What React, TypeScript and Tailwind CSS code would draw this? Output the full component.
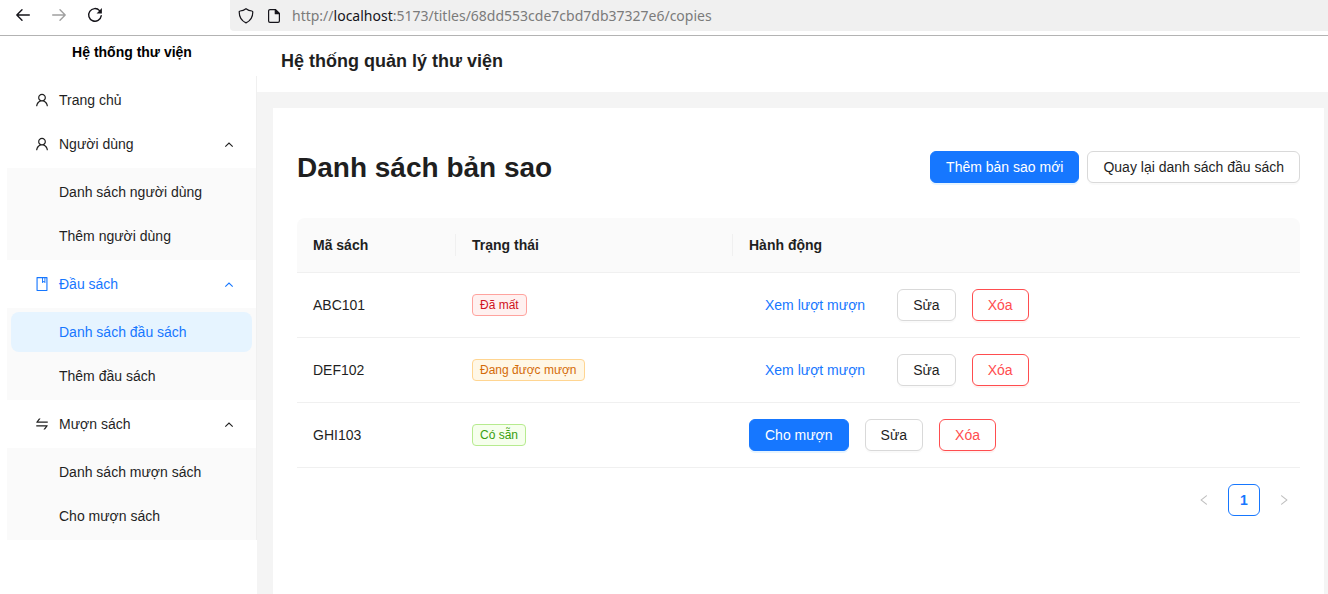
import React from "react";
import {
  AiOutlineUser,
  AiOutlineBook,
  AiOutlineSwap,
  AiOutlineLeft,
  AiOutlineRight,
} from "react-icons/ai";

type MenuGroup = {
  label: string;
  icon: React.ReactNode;
  active?: boolean;
  children?: { label: string; selected?: boolean }[];
};

type Copy = { code: string; status: "lost" | "borrowed" | "available" };

const tight = "64 64 896 896";

const menu: MenuGroup[] = [
  { label: "Trang chủ", icon: <AiOutlineUser size={14} viewBox={tight} /> },
  {
    label: "Người dùng",
    icon: <AiOutlineUser size={14} viewBox={tight} />,
    children: [{ label: "Danh sách người dùng" }, { label: "Thêm người dùng" }],
  },
  {
    label: "Đầu sách",
    icon: <AiOutlineBook size={14} viewBox={tight} />,
    active: true,
    children: [{ label: "Danh sách đầu sách", selected: true }, { label: "Thêm đầu sách" }],
  },
  {
    label: "Mượn sách",
    icon: <AiOutlineSwap size={14} viewBox={tight} />,
    children: [{ label: "Danh sách mượn sách" }, { label: "Cho mượn sách" }],
  },
];

const copies: Copy[] = [
  { code: "ABC101", status: "lost" },
  { code: "DEF102", status: "borrowed" },
  { code: "GHI103", status: "available" },
];

const statusTags = {
  lost: { text: "Đã mất", style: "border-[#ffa39e] bg-[#fff1f0] text-[#cf1322]" },
  borrowed: { text: "Đang được mượn", style: "border-[#ffd591] bg-[#fff7e6] text-[#d46b08]" },
  available: { text: "Có sẵn", style: "border-[#b7eb8f] bg-[#f6ffed] text-[#389e0d]" },
};

const buttonStyles = {
  primary: "border-[#1677ff] bg-[#1677ff] text-white shadow-[0_2px_0_rgba(5,145,255,0.1)]",
  default: "border-[#d9d9d9] bg-white text-[#1f1f1f] shadow-[0_2px_0_rgba(0,0,0,0.02)]",
  danger: "border-[#ff4d4f] bg-white text-[#ff4d4f] shadow-[0_2px_0_rgba(255,38,5,0.06)]",
  link: "border-transparent text-[#1677ff]",
};

function Button({ kind, children }: { kind: keyof typeof buttonStyles; children: React.ReactNode }) {
  return (
    <button
      type="button"
      className={`h-8 cursor-pointer whitespace-nowrap rounded-md border px-[15px] text-sm ${buttonStyles[kind]}`}
    >
      {children}
    </button>
  );
}

function BrowserBar() {
  const stroke = { fill: "none", stroke: "currentColor", strokeWidth: 1.4 } as const;
  return (
    <div className="flex h-9 items-start border-b border-[#b3b3b3] bg-white text-[#15141a]">
      <div className="flex h-[30px] w-[230px] shrink-0 items-center gap-5 pl-[15px]">
        <button type="button" aria-label="Quay lại" className="h-4 w-4">
          <svg width="16" height="16" viewBox="0 0 16 16" {...stroke} strokeLinecap="round" strokeLinejoin="round">
            <path d="M14.300 8H1.800M7 2.800 1.800 8 7 13.200" />
          </svg>
        </button>
        <button type="button" aria-label="Tiến" className="h-4 w-4 text-[#a0a0a0]">
          <svg width="16" height="16" viewBox="0 0 16 16" {...stroke} strokeLinecap="round" strokeLinejoin="round">
            <path d="M1.700 8h12.500M9 2.800 14.200 8 9 13.200" />
          </svg>
        </button>
        <button type="button" aria-label="Tải lại" className="h-4 w-4">
          <svg width="16" height="16" viewBox="0 0 16 16" {...stroke} strokeLinecap="round">
            <path d="M14.200 8.800A6.300 6.300 0 1 1 12.600 3.600" />
            <path d="M14.900 1v5.400H9.600z" fill="currentColor" stroke="none" />
          </svg>
        </button>
      </div>
      <div className="flex h-[31px] min-w-0 flex-1 items-center rounded-bl bg-[#f0f0f0] pl-2">
        <svg width="16" height="16" viewBox="0 0 16 16" {...stroke} strokeWidth={1.2} strokeLinejoin="round">
          <path d="M8 .7C6.200 2 4.200 2.800 2.100 3c-.5 0-.9.4-.9.9 0 5 2 8.600 6.800 11 4.800-2.400 6.800-6 6.800-11 0-.5-.4-.9-.9-.9C11.800 2.800 9.800 2 8 .7z" />
        </svg>
        <svg width="16" height="16" viewBox="0 0 16 16" className="ml-3" {...stroke} strokeWidth={1.2} strokeLinejoin="round">
          <path d="M9.500 1.600H4c-.8 0-1.400.6-1.400 1.400v10c0 .8.6 1.400 1.400 1.400h8c.8 0 1.400-.6 1.400-1.400V5.500z" />
          <path d="M9.300 1.600v4.100h4.100z" fill="currentColor" />
        </svg>
        <div
          role="textbox"
          aria-label="Địa chỉ"
          contentEditable
          suppressContentEditableWarning
          className="ml-2.5 truncate font-['Noto_Sans',sans-serif] text-sm text-[#7b7b7b] outline-none"
        >
          http://<span className="text-[#15141a]">localhost</span>:5173/titles/68dd553cde7cbd7db37327e6/copies
        </div>
      </div>
    </div>
  );
}

function Sidebar() {
  return (
    <aside className="w-[257px] shrink-0 bg-white pl-[7px]">
      <div className="mb-2 py-1 text-center text-sm leading-6 font-bold text-black">Hệ thống thư viện</div>
      <nav className="flex flex-col gap-1 border-r border-[#f0f0f0] pt-1">
        {menu.map((group) => (
          <React.Fragment key={group.label}>
            {group.children ? (
              <button
                type="button"
                aria-expanded="true"
                className={`mx-1 flex h-10 items-center gap-2.5 pr-4 pl-6 text-left ${group.active ? "text-[#1677ff]" : ""}`}
              >
                {group.icon}
                <span className="flex-1">{group.label}</span>
                <svg width="14" height="14" viewBox="0 0 14 14" fill="none" stroke="currentColor" strokeWidth="1.1">
                  <path d="M3.300 9.600 7 6l3.700 3.600" />
                </svg>
              </button>
            ) : (
              <a href="#" className="mx-1 flex h-10 items-center gap-2.5 pr-4 pl-6">
                {group.icon}
                <span>{group.label}</span>
              </a>
            )}
            {group.children && (
              <ul className="flex flex-col gap-1 bg-[#fafafa] p-1">
                {group.children.map((item) => (
                  <li key={item.label}>
                    <a
                      href="#"
                      className={`flex h-10 items-center rounded-lg pl-12 ${item.selected ? "bg-[#e6f4ff] text-[#1677ff]" : ""}`}
                    >
                      {item.label}
                    </a>
                  </li>
                ))}
              </ul>
            )}
          </React.Fragment>
        ))}
      </nav>
    </aside>
  );
}

function CopiesTable() {
  const headCell = "border-b border-[#f0f0f0] bg-[#fafafa] py-4 pl-4 text-left font-bold";
  const cell = "border-b border-[#f0f0f0] p-4";
  return (
    <table className="w-full table-fixed border-separate border-spacing-0">
      <thead>
        <tr>
          <th className={`w-[159px] rounded-tl-lg ${headCell}`}>
            <div className="border-r border-[#f0f0f0]">Mã sách</div>
          </th>
          <th className={`w-[277px] ${headCell}`}>
            <div className="border-r border-[#f0f0f0]">Trạng thái</div>
          </th>
          <th className={`rounded-tr-lg ${headCell}`}>Hành động</th>
        </tr>
      </thead>
      <tbody>
        {copies.map((copy) => (
          <tr key={copy.code}>
            <td className={cell}>{copy.code}</td>
            <td className={cell}>
              <span
                className={`block w-fit rounded border px-[7px] text-xs leading-5 ${statusTags[copy.status].style}`}
              >
                {statusTags[copy.status].text}
              </span>
            </td>
            <td className={cell}>
              <div className="flex gap-4">
                {copy.status === "available" ? (
                  <Button kind="primary">Cho mượn</Button>
                ) : (
                  <Button kind="link">Xem lượt mượn</Button>
                )}
                <Button kind="default">Sửa</Button>
                <Button kind="danger">Xóa</Button>
              </div>
            </td>
          </tr>
        ))}
      </tbody>
    </table>
  );
}

export default function App() {
  return (
    <div className="flex min-h-screen flex-col bg-white font-['Liberation_Sans',Arial,sans-serif] text-sm leading-[22px] text-[#1f1f1f]">
      <BrowserBar />
      <div className="flex flex-1">
        <Sidebar />
        <div className="flex min-w-0 flex-1 flex-col bg-[#f4f4f4]">
          <header className="flex h-14 items-center bg-white px-6 pb-1.5 text-lg font-bold">
            Hệ thống quản lý thư viện
          </header>
          <main className="mt-4 mr-1 ml-4 flex-1 bg-white px-6 pt-[43px]">
            <div className="mb-[35px] flex items-center justify-between">
              <h1 className="text-[28px] leading-[34px] font-bold -mb-0.5">Danh sách bản sao</h1>
              <div className="flex gap-2">
                <Button kind="primary">Thêm bản sao mới</Button>
                <Button kind="default">Quay lại danh sách đầu sách</Button>
              </div>
            </div>
            <CopiesTable />
            <nav aria-label="Phân trang" className="my-4 flex justify-end gap-2">
              <button
                type="button"
                disabled
                aria-label="Trang trước"
                className="flex h-8 w-8 items-center justify-center text-[#bfbfbf]"
              >
                <AiOutlineLeft size={12} viewBox={tight} />
              </button>
              <button
                type="button"
                aria-current="page"
                className="h-8 w-8 rounded-md border border-[#1677ff] font-bold text-[#1677ff]"
              >
                1
              </button>
              <button
                type="button"
                disabled
                aria-label="Trang sau"
                className="flex h-8 w-8 items-center justify-center text-[#bfbfbf]"
              >
                <AiOutlineRight size={12} viewBox={tight} />
              </button>
            </nav>
          </main>
        </div>
      </div>
    </div>
  );
}
